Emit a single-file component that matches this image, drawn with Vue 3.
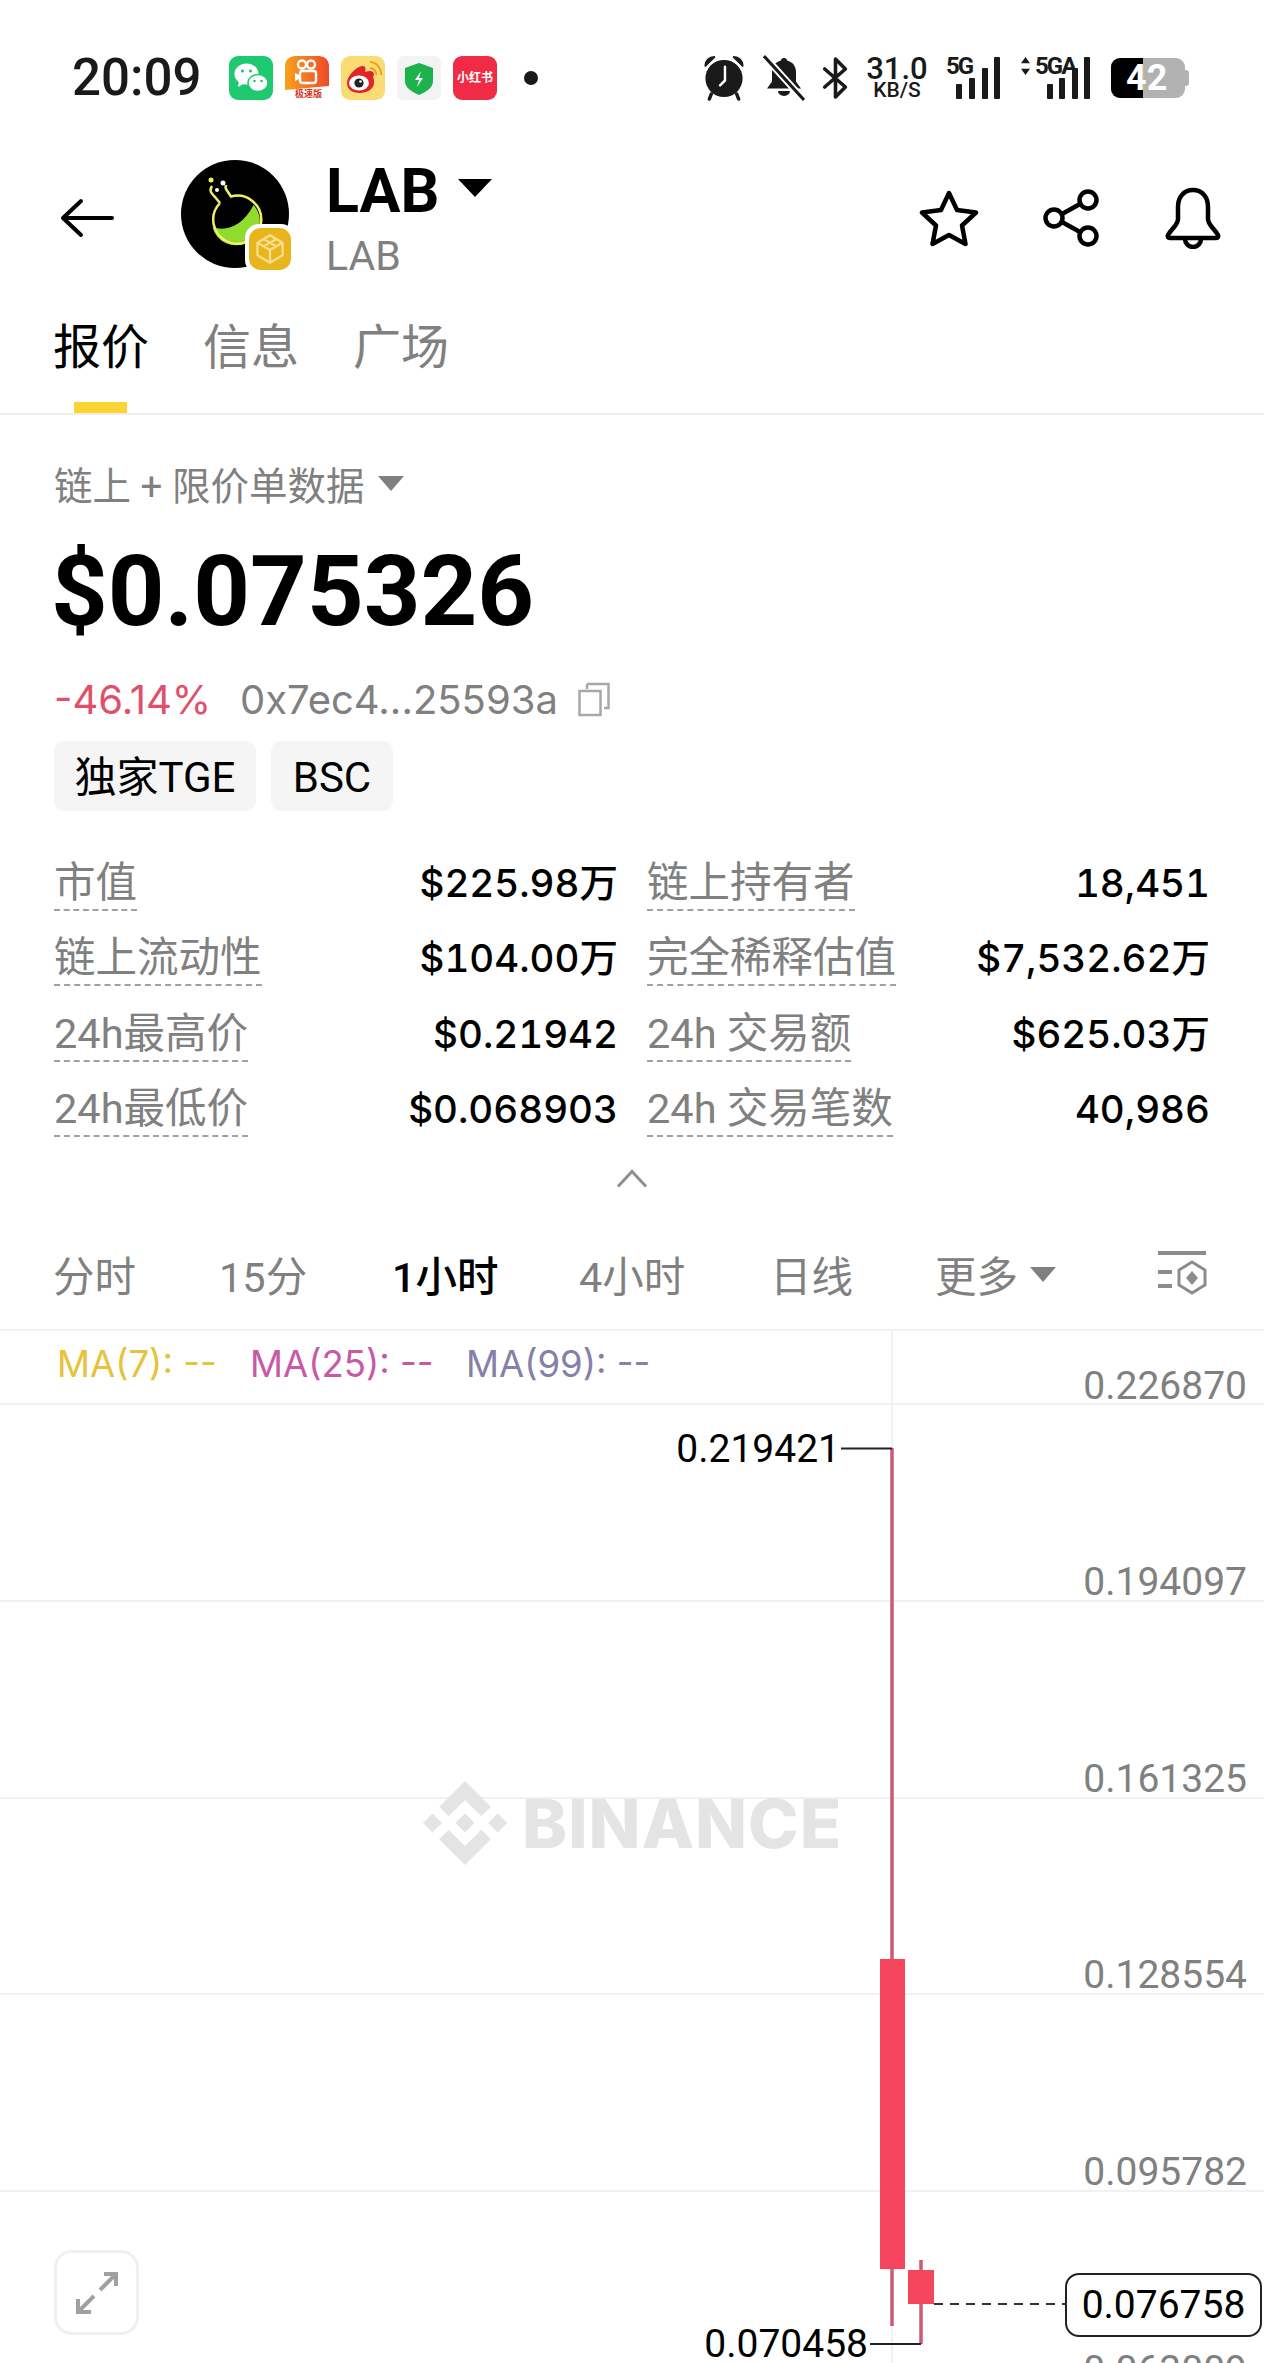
<template>
  <div class="screen">
    <div class="status-bar">
      <span class="time">20:09</span>
      <div class="app-icons">
        <svg class="app" viewBox="0 0 44 44">
          <rect width="44" height="44" rx="9" fill="#1fc96f" />
          <ellipse cx="17.5" cy="18" rx="12" ry="10.5" fill="#fff" />
          <path d="M10 25l-1 6 6-3.5z" fill="#fff" />
          <ellipse cx="29" cy="27" rx="10" ry="8.5" fill="#fff" stroke="#1fc96f" stroke-width="1.5" />
          <circle cx="13.5" cy="15" r="1.6" fill="#1fc96f" />
          <circle cx="21.5" cy="15" r="1.6" fill="#1fc96f" />
          <circle cx="25.5" cy="25" r="1.3" fill="#1fc96f" />
          <circle cx="32.5" cy="25" r="1.3" fill="#1fc96f" />
        </svg>
        <div class="app kuai">
          <svg viewBox="0 0 44 44">
            <defs>
              <linearGradient id="kuai" x1="0" y1="0" x2="1" y2="0">
                <stop offset="0" stop-color="#f7a21c" />
                <stop offset="1" stop-color="#ef4a2a" />
              </linearGradient>
            </defs>
            <path d="M9 0h26a9 9 0 0 1 9 9v21l-44 4V9a9 9 0 0 1 9-9z" fill="url(#kuai)" />
            <circle cx="17" cy="8.500" r="4" fill="none" stroke="#fff" stroke-width="2.400" />
            <circle cx="26" cy="8.500" r="4" fill="none" stroke="#fff" stroke-width="2.400" />
            <rect x="15" y="15" width="16" height="12" rx="2.500" fill="none" stroke="#fff" stroke-width="2.400" />
            <path d="M14 19l-4-2v8l4-2z" fill="#fff" />
          </svg>
          <span>极速版</span>
        </div>
        <svg class="app" viewBox="0 0 44 44">
          <rect width="44" height="44" rx="9" fill="#fbdc74" />
          <path d="M33 27c0 6-7 10-14 10S6 34 6 27c0-7 9-16 15-17 4-.5 4 3 3 6 5-2 9-1 9 2 0 1-.4 2-1 3 1 1 1 4 1 6z" fill="#e0242c" />
          <ellipse cx="18" cy="27" rx="10" ry="7.500" fill="#fff" />
          <circle cx="18" cy="27" r="4.600" fill="#222" />
          <circle cx="19.500" cy="25.500" r="1.300" fill="#fff" />
          <path d="M29 12c4 .5 6 3 6.500 7M29 6c7 .5 11 6 11.500 13" fill="none" stroke="#e8a21c" stroke-width="1.800" />
        </svg>
        <svg class="app" viewBox="0 0 44 44">
          <rect width="44" height="44" rx="7" fill="#f1f4f3" />
          <path d="M22 7l14 5v13c0 7-7 11-14 14-7-3-14-7-14-14V12z" fill="#1db24c" />
          <path d="M24 15l-6 9h4l-2 7 6-9h-4z" fill="#fff" />
        </svg>
        <div class="app xhs">小红书</div>
        <span class="dot"></span>
      </div>
      <div class="sys-icons">
        <svg class="alarm" viewBox="0 0 44 48">
          <path d="M3 12a9 9 0 0 1 9-9zM41 12a9 9 0 0 0-9-9z" fill="#1a1a1a" stroke="#1a1a1a" stroke-width="2" stroke-linejoin="round" />
          <circle cx="22" cy="25" r="19" fill="#1a1a1a" />
          <path d="M9 41l-2 5M35 41l2 5" stroke="#1a1a1a" stroke-width="3.500" stroke-linecap="round" />
          <path d="M23 13v14l-5 5" fill="none" stroke="#fff" stroke-width="2.500" stroke-linecap="round" />
        </svg>
        <svg class="bell-off" viewBox="0 0 42 46">
          <path d="M21 3c2 0 3 1 3 2.500 6 1.500 9 6 9 12v9l5 7H4l5-7v-9c0-6 3-10.500 9-12C18 4 19 3 21 3z" fill="#1a1a1a" />
          <path d="M15 36h12a6 5 0 0 1-12 0z" fill="#1a1a1a" />
          <path d="M1 1l40 44" stroke="#fff" stroke-width="7" />
          <path d="M1 1l40 44" stroke="#1a1a1a" stroke-width="3" />
        </svg>
        <svg class="bluetooth" viewBox="0 0 30 46">
          <path d="M3 13l23 20-11 11V2l11 11L3 33" fill="none" stroke="#1a1a1a" stroke-width="4" stroke-linejoin="round" stroke-linecap="round" />
        </svg>
        <div class="speed">
          <b>31.0</b>
          <i>KB/S</i>
        </div>
        <div class="signal sim1">
          <span class="net">5G</span>
          <span class="bar b1"></span><span class="bar b2"></span><span class="bar b3"></span><span class="bar b4"></span>
        </div>
        <div class="signal sim2">
          <svg class="updown" viewBox="0 0 12 20"><path d="M6 0l5 7H1zM6 20l-5-7h10z" fill="#1a1a1a" /></svg>
          <span class="net">5GA</span>
          <span class="bar b1"></span><span class="bar b2"></span><span class="bar b3"></span><span class="bar b4"></span>
        </div>
        <div class="battery">
          <div class="battery-body">
            <div class="battery-fill"></div>
            <span>42</span>
          </div>
        </div>
      </div>
    </div>

    <div class="header">
      <svg class="back" viewBox="0 0 54 40">
        <path d="M52 20H3M21 3L3 20l18 17" fill="none" stroke="#000" stroke-width="4" stroke-linecap="round" stroke-linejoin="round" />
      </svg>
      <div class="avatar">
        <svg viewBox="0 0 108 108" class="avatar-img">
          <circle cx="54" cy="54" r="54" fill="#000" />
          <path d="M31.500 67C45 72 62 66 72.500 45A24 24 0 1 1 31.500 67z" fill="#8fdc2e" />
          <path d="M39 43A24 24 0 1 0 50 36.500L45 29c-1-2 0-3 0-4M39 43l-5-6c-4-4-6-6-3-11" fill="none" stroke="#eef06a" stroke-width="2.500" />
          <circle cx="30" cy="20" r="2.500" fill="#eef06a" />
          <circle cx="42" cy="23" r="2.500" fill="#fff" />
          <circle cx="36" cy="30" r="2" fill="#fff" />
        </svg>
        <div class="badge">
          <svg viewBox="0 0 40 40">
            <rect x="0" y="0" width="40" height="40" rx="11" fill="#e9b51f" />
            <path d="M20 7l12 7v12l-12 7-12-7V14zM8 14l12 7 12-7M20 21v12M14 10.500l12 7M26 10.500l-12 7" fill="none" stroke="#f8dd8c" stroke-width="2.200" stroke-linejoin="round" />
          </svg>
        </div>
      </div>
      <div class="token">
        <div class="token-name">LAB<span class="caret-big"></span></div>
        <div class="token-sub">LAB</div>
      </div>
      <div class="header-actions">
        <svg class="star" viewBox="0 0 60 58">
          <path d="M30 4l8 17 19 2.500-14 13 3.500 18.500L30 46l-16.500 9L17 36.500 3 23.500 22 21z" fill="none" stroke="#000" stroke-width="4.500" stroke-linejoin="round" />
        </svg>
        <svg class="share" viewBox="0 0 60 60">
          <circle cx="46" cy="12" r="8.500" fill="none" stroke="#000" stroke-width="4.500" />
          <circle cx="12" cy="30" r="8.500" fill="none" stroke="#000" stroke-width="4.500" />
          <circle cx="46" cy="48" r="8.500" fill="none" stroke="#000" stroke-width="4.500" />
          <path d="M20 26l18-10M20 34l18 10" stroke="#000" stroke-width="4.500" />
        </svg>
        <svg class="bell" viewBox="0 0 60 62">
          <path d="M30 3c-10 0-15 8-15 17v12c0 6-6 9-10 16-1 2 0 3 2 3h46c2 0 3-1 2-3-4-7-10-10-10-16V20C45 11 40 3 30 3z" fill="none" stroke="#000" stroke-width="4.500" stroke-linejoin="round" />
          <path d="M22 52a8 8 0 0 0 16 0" fill="none" stroke="#000" stroke-width="4.500" />
        </svg>
      </div>
    </div>

    <div class="tabs">
      <div v-for="(t, i) in tabs" :key="t" class="tab" :class="{ active: i === 0 }">{{ t }}</div>
    </div>

    <div class="summary">
      <div class="source">链上 + 限价单数据<span class="caret-gray"></span></div>
      <div class="price">$0.075326</div>
      <div class="change-row">
        <span class="change">-46.14%</span>
        <span class="address">0x7ec4...25593a</span>
        <svg class="copy" viewBox="0 0 32 36">
          <rect x="1.500" y="10" width="21" height="24" fill="none" stroke="#a8a8a8" stroke-width="2.500" />
          <path d="M9 3h21.500v24H26M9 3v5" fill="none" stroke="#a8a8a8" stroke-width="2.500" />
        </svg>
      </div>
      <div class="chips">
        <span class="chip wide">独家TGE</span>
        <span class="chip">BSC</span>
      </div>
      <div class="stats">
        <div v-for="s in stats" :key="s.label" class="stat">
          <span class="stat-label">{{ s.label }}</span>
          <span class="stat-value">{{ s.value }}</span>
        </div>
      </div>
    </div>

    <svg class="collapse" viewBox="0 0 32 20">
      <path d="M2 18L16 3l14 15" fill="none" stroke="#909090" stroke-width="3" />
    </svg>

    <div class="intervals">
      <span>分时</span>
      <span>15分</span>
      <span class="current">1小时</span>
      <span>4小时</span>
      <span>日线</span>
      <span class="more">更多<i class="caret-gray"></i></span>
      <svg class="chart-set" viewBox="0 0 52 50">
        <path d="M2 3h48M2 22h14M2 36h14" stroke="#8c8c8c" stroke-width="4" fill="none" />
        <path d="M36 12l13 8v15l-13 8-13-8V20z" fill="none" stroke="#8c8c8c" stroke-width="3" />
        <path d="M36 21l6 7-6 7-6-7z" fill="#8c8c8c" />
      </svg>
    </div>

    <div class="chart">
      <svg class="chart-svg" viewBox="0 0 1264 1034">
        <line v-for="y in gridY" :key="y" x1="0" x2="1264" :y1="y" :y2="y" stroke="#f1f1f1" stroke-width="2" />
        <line x1="892" x2="892" y1="0" y2="1034" stroke="#f1f1f1" stroke-width="2" />
        <line x1="892" x2="892" y1="119" y2="997" stroke="#cc5a72" stroke-width="3.500" />
        <rect x="880" y="630" width="25" height="310" fill="#f6465d" />
        <line x1="921" x2="921" y1="931" y2="1015" stroke="#cc5a72" stroke-width="3.500" />
        <rect x="908" y="941" width="26" height="34" fill="#f6465d" />
        <line x1="841" x2="892" y1="119.500" y2="119.500" stroke="#222" stroke-width="2" />
        <line x1="870" x2="921" y1="1015" y2="1015" stroke="#222" stroke-width="2" />
        <line x1="934" x2="1065" y1="975" y2="975" stroke="#333" stroke-width="2" stroke-dasharray="9 7" />
      </svg>

      <div class="watermark">
        <svg viewBox="0 0 126.610 126.610">
          <path d="M38.730 53.200l24.590-24.580 24.600 24.600 14.300-14.310L63.320 0 24.420 38.900l14.310 14.300zM0 63.310l14.310-14.310 14.310 14.310-14.310 14.310zM38.730 73.410l24.590 24.590 24.600-24.600 14.310 14.290-38.900 38.910-38.910-38.880-.02-.02zM98.280 63.310l14.310-14.310 14.310 14.310-14.310 14.310zM77.830 63.300L63.320 48.780 52.590 59.510l-1.240 1.230-2.540 2.540 14.510 14.500 14.510-14.510.01-.01z" fill="#e4e4e4" />
        </svg>
        <span>BINANCE</span>
      </div>

      <div class="ma-row">
        <span class="ma7">MA(7): --</span>
        <span class="ma25">MA(25): --</span>
        <span class="ma99">MA(99): --</span>
      </div>

      <span v-for="a in axis" :key="a.v" class="axis-label" :style="{ top: a.y + 'px' }">{{ a.v }}</span>
      <span class="mark high">0.219421</span>
      <span class="mark low">0.070458</span>
      <span class="last-price">0.076758</span>

      <div class="expand">
        <svg viewBox="0 0 56 56">
          <path d="M31 25l15-15M35 9h12v12M25 31L10 46M9 34v13h13" fill="none" stroke="#a0a0a0" stroke-width="4" />
        </svg>
      </div>
    </div>
  </div>
</template>

<script setup>
const tabs = ['报价', '信息', '广场']

const stats = [
  { label: '市值', value: '$225.98万' },
  { label: '链上持有者', value: '18,451' },
  { label: '链上流动性', value: '$104.00万' },
  { label: '完全稀释估值', value: '$7,532.62万' },
  { label: '24h最高价', value: '$0.21942' },
  { label: '24h 交易额', value: '$625.03万' },
  { label: '24h最低价', value: '$0.068903' },
  { label: '24h 交易笔数', value: '40,986' }
]

const gridY = [75, 272, 469, 665, 862]

const axis = [
  { v: '0.226870', y: 33 },
  { v: '0.194097', y: 229 },
  { v: '0.161325', y: 426 },
  { v: '0.128554', y: 622 },
  { v: '0.095782', y: 819 },
  { v: '0.063009', y: 1017 }
]
</script>

<style>
html, body {
  margin: 0;
  background: #fff;
}
</style>

<style scoped>
.screen {
  width: 1264px;
  height: 2363px;
  overflow: hidden;
  background: #fff;
  font-family: Roboto, "Noto Sans CJK SC", sans-serif;
  color: #000;
  display: flex;
  flex-direction: column;
}

/* status bar */
.status-bar {
  height: 155px;
  flex: none;
  display: flex;
  align-items: center;
  padding-left: 72px;
  box-sizing: border-box;
}
.time {
  width: 157px;
  font-size: 51px;
  font-weight: 500;
  color: #1a1a1a;
}
.app-icons {
  display: flex;
  align-items: center;
  gap: 12px;
  width: 473px;
}
.app {
  width: 44px;
  height: 44px;
  flex: none;
}
.kuai {
  position: relative;
  border-radius: 9px;
  overflow: hidden;
}
.kuai svg {
  display: block;
  width: 44px;
  height: 44px;
}
.kuai span {
  position: absolute;
  left: 10px;
  bottom: 1px;
  font-size: 9px;
  line-height: 10px;
  font-weight: 700;
  color: #d8331f;
}
.xhs {
  background: #ef2b45;
  border-radius: 9px;
  color: #fff;
  font-size: 12px;
  font-weight: 700;
  line-height: 44px;
  text-align: center;
  white-space: nowrap;
}
.dot {
  width: 14px;
  height: 14px;
  border-radius: 50%;
  background: #1a1a1a;
  margin-left: 15px;
}
.sys-icons {
  display: flex;
  align-items: center;
  height: 48px;
}
.alarm {
  width: 44px;
  height: 47px;
}
.bell-off {
  width: 42px;
  height: 46px;
  margin-left: 17px;
}
.bluetooth {
  width: 27px;
  height: 44px;
  margin-left: 17px;
}
.speed {
  width: 62px;
  height: 44px;
  margin-left: 17px;
  display: flex;
  flex-direction: column;
  align-items: center;
  color: #1a1a1a;
}
.speed b {
  font-size: 31px;
  line-height: 25px;
  font-weight: 500;
}
.speed i {
  font-size: 21px;
  line-height: 19px;
  font-style: normal;
  font-weight: 500;
}
.signal {
  position: relative;
  height: 42px;
}
.sim1 {
  width: 55px;
  margin-left: 18px;
}
.sim2 {
  width: 71px;
  margin-left: 19px;
}
.net {
  position: absolute;
  top: 0;
  left: 0;
  font-size: 24px;
  line-height: 18px;
  font-weight: 700;
  color: #1a1a1a;
  letter-spacing: -2px;
}
.sim2 .net {
  left: 15px;
}
.updown {
  position: absolute;
  left: 0;
  top: 0;
  width: 11px;
  height: 18px;
}
.bar {
  position: absolute;
  bottom: 0;
  width: 6px;
  border-radius: 1px;
  background: #1a1a1a;
}
.b1 { height: 15px; }
.b2 { height: 21px; }
.b3 { height: 31px; }
.b4 { height: 42px; }
.sim1 .b1 { left: 10px; }
.sim1 .b2 { left: 23px; }
.sim1 .b3 { left: 36px; }
.sim1 .b4 { left: 48px; }
.sim2 .b1 { left: 27px; }
.sim2 .b2 { left: 39px; }
.sim2 .b3 { left: 52px; }
.sim2 .b4 { left: 64px; }
.battery {
  position: relative;
  width: 78px;
  height: 40px;
  margin-left: 20px;
}
.battery::after {
  content: "";
  position: absolute;
  right: 0;
  top: 12px;
  width: 4px;
  height: 16px;
  background: #b2b2b2;
  border-radius: 0 3px 3px 0;
}
.battery-body {
  position: relative;
  width: 74px;
  height: 40px;
  background: #b2b2b2;
  border-radius: 9px;
  overflow: hidden;
}
.battery-fill {
  position: absolute;
  left: 0;
  top: 0;
  bottom: 0;
  width: 32px;
  background: #000;
}
.battery span {
  position: absolute;
  left: 15px;
  top: 0;
  font-size: 36px;
  line-height: 40px;
  font-weight: 700;
  color: #fff;
}

/* header */
.header {
  height: 126px;
  flex: none;
  display: flex;
  align-items: center;
  padding: 0 40px 0 60px;
  box-sizing: border-box;
}
.back {
  width: 54px;
  height: 40px;
}
.avatar {
  position: relative;
  width: 108px;
  height: 108px;
  margin-left: 67px;
  margin-bottom: 8px;
}
.avatar-img {
  display: block;
  width: 108px;
  height: 108px;
}
.badge {
  position: absolute;
  right: -6px;
  bottom: -6px;
  width: 42px;
  height: 42px;
  border: 4px solid #fff;
  border-radius: 14px;
  background: #fff;
}
.badge svg {
  display: block;
  width: 42px;
  height: 42px;
}
.token {
  margin-left: 37px;
}
.token-name {
  display: flex;
  align-items: center;
  font-size: 61px;
  line-height: 70px;
  font-weight: 700;
  margin-top: -2px;
}
.caret-big {
  width: 0;
  height: 0;
  margin-left: 19px;
  margin-bottom: 6px;
  border-left: 17px solid transparent;
  border-right: 17px solid transparent;
  border-top: 18px solid #000;
}
.token-sub {
  font-size: 41px;
  line-height: 44px;
  color: #808080;
  margin-top: 8px;
}
.header-actions {
  display: flex;
  align-items: center;
  margin-left: auto;
  margin-right: 1px;
}
.star {
  width: 60px;
  height: 58px;
}
.share {
  width: 60px;
  height: 60px;
  margin-left: 63px;
}
.bell {
  width: 60px;
  height: 62px;
  margin-left: 61px;
}

/* tabs */
.tabs {
  height: 134px;
  flex: none;
  display: flex;
  padding: 34px 0 0 53px;
  box-sizing: border-box;
  border-bottom: 2px solid #eeeeee;
}
.tab {
  position: relative;
  font-size: 48px;
  line-height: 66px;
  height: 66px;
  width: 150px;
  color: #808080;
}
.tab.active {
  color: #000;
}
.tab.active::after {
  content: "";
  position: absolute;
  left: 21px;
  top: 87px;
  width: 53px;
  height: 11px;
  background: #fcd535;
}

/* summary */
.summary {
  flex: none;
  padding: 38px 54px 0;
}
.source {
  display: flex;
  align-items: center;
  height: 60px;
  font-size: 38.500px;
  color: #808080;
}
.caret-gray {
  display: inline-block;
  width: 0;
  height: 0;
  border-left: 13px solid transparent;
  border-right: 13px solid transparent;
  border-top: 15px solid #808080;
  margin-left: 14px;
}
.price {
  margin-top: 23px;
  margin-left: -3px;
  font-size: 99px;
  line-height: 110px;
  font-weight: 700;
}
.change-row {
  display: flex;
  align-items: center;
  margin-top: 28px;
  height: 50px;
  font-family: Inter, Roboto, sans-serif;
  font-size: 40px;
}
.change {
  color: #e0506a;
  width: 186px;
}
.address {
  color: #808080;
}
.copy {
  width: 32px;
  height: 36px;
  margin-left: 20px;
}
.chips {
  display: flex;
  gap: 15px;
  margin-top: 17px;
}
.chip {
  height: 70px;
  width: 122px;
  background: #f5f5f5;
  border-radius: 10px;
  font-size: 42px;
  line-height: 73px;
  text-align: center;
}
.chip.wide {
  width: 202px;
}
.stats {
  display: grid;
  grid-template-columns: 564px 563px;
  column-gap: 29px;
  grid-auto-rows: 75.300px;
  margin-top: 35px;
}
.stat {
  display: flex;
  justify-content: space-between;
  align-items: flex-start;
  padding-top: 11px;
}
.stat-label {
  font-size: 41.500px;
  line-height: 52px;
  color: #808080;
  border-bottom: 2px dashed #a0a0a0;
}
.stat-value {
  font-family: Inter, "Noto Sans CJK SC", sans-serif;
  font-size: 38.500px;
  line-height: 52px;
  font-weight: 500;
  font-variant-numeric: tabular-nums;
}

.collapse {
  display: block;
  width: 32px;
  height: 21px;
  flex: none;
  margin: 21px 0 0 616px;
}

/* intervals */
.intervals {
  flex: none;
  display: grid;
  grid-template-columns: 166px 173px 187px 191px 165px 221px auto;
  align-items: center;
  height: 80px;
  margin-top: 45px;
  margin-bottom: 15px;
  padding-left: 53px;
  font-size: 41.500px;
  color: #808080;
}
.current {
  color: #000;
  font-weight: 500;
}
.more {
  display: flex;
  align-items: center;
}
.more .caret-gray {
  margin-left: 12px;
}
.chart-set {
  width: 52px;
  height: 50px;
  margin-top: 2px;
}

/* chart: everything in here is placed on the price/time canvas */
.chart {
  position: relative;
  flex: 1;
  border-top: 2px solid #f1f1f1;
}
.chart-svg {
  position: absolute;
  left: 0;
  top: -2px;
  width: 1264px;
  height: 1034px;
}
.ma-row {
  position: relative;
  display: flex;
  padding: 11px 0 0 57px;
  font-family: Inter, Roboto, sans-serif;
  font-size: 36.500px;
  line-height: 44px;
}
.ma7 { color: #e5c33a; width: 193px; }
.ma25 { color: #c85aa5; width: 216px; }
.ma99 { color: #8580a8; }
.axis-label {
  position: absolute;
  right: 17px;
  font-size: 39px;
  line-height: 44px;
  color: #808080;
}
.mark {
  position: absolute;
  font-size: 39px;
  line-height: 38px;
}
.high {
  right: 424px;
  top: 99px;
}
.low {
  right: 396px;
  top: 994px;
}
.last-price {
  position: absolute;
  left: 1065px;
  top: 942px;
  width: 197px;
  height: 64px;
  box-sizing: border-box;
  border: 2px solid #222;
  border-radius: 14px;
  background: #fff;
  font-size: 39px;
  line-height: 60px;
  text-align: center;
}
.watermark {
  position: absolute;
  left: 423px;
  top: 450px;
  display: flex;
  align-items: center;
  gap: 15px;
}
.watermark svg {
  width: 84px;
  height: 84px;
}
.watermark span {
  font-family: Inter, "Liberation Sans", sans-serif;
  font-size: 68px;
  line-height: 84px;
  font-weight: 800;
  color: #e4e4e4;
  letter-spacing: 1px;
}
.expand {
  position: absolute;
  left: 54px;
  top: 919px;
  width: 85px;
  height: 85px;
  box-sizing: border-box;
  border: 3px solid #f0f0f0;
  border-radius: 18px;
  background: #fff;
  display: flex;
  align-items: center;
  justify-content: center;
}
.expand svg {
  width: 56px;
  height: 56px;
}
</style>
